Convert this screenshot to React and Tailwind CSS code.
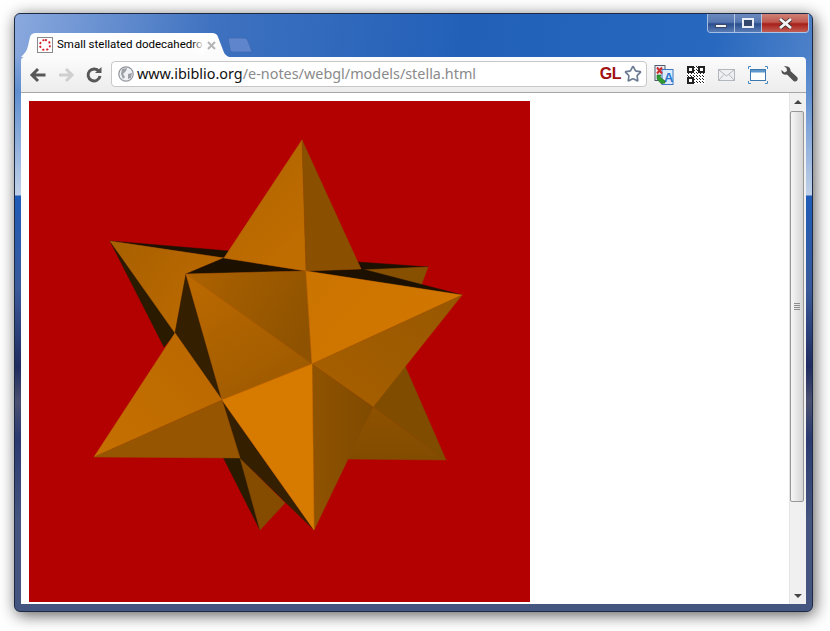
import React from 'react';
import { Star } from 'lucide-react';

const UI_FONT = 'font-["Noto_Sans","Open_Sans",sans-serif]';

const faces = [
  // rear spikes
  { points: '358,262 428,267 362,270', fill: '#1c1000' },
  { points: '360,270 428,267 421,286 400,290', fill: '#875000' },
  { points: '373,407 405,366 446,460', fill: '#804c00' },
  { points: '373,407 446,460 347,459', fill: 'url(#rearLow)' },
  { points: '223,457 260,530 241,458', fill: '#291a00' },
  { points: '240,458 285,503 260,530', fill: '#854c00' },
  { points: '110,241 229,251 224,258', fill: '#1c1000' },
  { points: '110,241 164,347 176,333', fill: '#2a1a00' },
  // left upper spike
  { points: '110,241 224,258 186,274 175,333', fill: 'url(#leftUp)' },
  { points: '186,274 175,333 222,400', fill: '#342000' },
  // top spike
  { points: '224,258 306,271 186,274', fill: '#1c1000' },
  { points: '306,271 362,269 462,295', fill: '#1c1000' },
  { points: '302,140 224,258 306,271', fill: 'url(#topLeft)' },
  { points: '302,140 306,271 361,269', fill: '#8a5000' },
  // front body
  { points: '186,274 306,271 312,364', fill: 'url(#bodyTop)' },
  { points: '186,274 312,364 222,400', fill: 'url(#bodyLeft)' },
  { points: '306,271 462,295 312,364', fill: 'url(#bright)' },
  { points: '312,364 462,295 373,407', fill: 'url(#rightMid)' },
  { points: '312,364 373,407 314,530', fill: 'url(#rightLow)' },
  { points: '222,400 314,530 240,458', fill: '#342000' },
  { points: '222,400 312,364 314,530', fill: '#d67a00' },
  // lower left spike
  { points: '175,333 222,400 94,457', fill: 'url(#lowLeft)' },
  { points: '94,457 222,400 240,458', fill: '#965500' },
];

function Stella() {
  return (
    <svg width="501" height="501" viewBox="29 101 501 501" className="block">
      <defs>
        <linearGradient id="leftUp" x1="0" y1="0" x2="1" y2="0.6">
          <stop offset="0" stopColor="#a86000" />
          <stop offset="1" stopColor="#bc6a00" />
        </linearGradient>
        <linearGradient id="topLeft" x1="0" y1="0" x2="0.6" y2="1">
          <stop offset="0" stopColor="#ad6300" />
          <stop offset="1" stopColor="#c06d00" />
        </linearGradient>
        <linearGradient id="bodyTop" x1="0" y1="0.2" x2="1" y2="0.6">
          <stop offset="0" stopColor="#ab6100" />
          <stop offset="1" stopColor="#8e5200" />
        </linearGradient>
        <linearGradient id="bodyLeft" x1="0.2" y1="0" x2="0.8" y2="1">
          <stop offset="0" stopColor="#ba6900" />
          <stop offset="1" stopColor="#9c5900" />
        </linearGradient>
        <linearGradient id="bright" x1="0" y1="0" x2="1" y2="0.5">
          <stop offset="0" stopColor="#cb7400" />
          <stop offset="1" stopColor="#d27700" />
        </linearGradient>
        <linearGradient id="rightMid" x1="0" y1="1" x2="1" y2="0">
          <stop offset="0" stopColor="#a86000" />
          <stop offset="1" stopColor="#975700" />
        </linearGradient>
        <linearGradient id="rightLow" x1="0" y1="0" x2="1" y2="0">
          <stop offset="0" stopColor="#905300" />
          <stop offset="1" stopColor="#7f4a00" />
        </linearGradient>
        <linearGradient id="rearLow" x1="0" y1="0" x2="0" y2="1">
          <stop offset="0" stopColor="#8e5200" />
          <stop offset="1" stopColor="#824c00" />
        </linearGradient>
        <linearGradient id="lowLeft" x1="0" y1="1" x2="1" y2="0">
          <stop offset="0" stopColor="#c57000" />
          <stop offset="1" stopColor="#b96800" />
        </linearGradient>
      </defs>
      <rect x="29" y="101" width="501" height="501" fill="#b30000" />
      {/* thin stroke of the same fill hides the red seams between faces */}
      {faces.map((f) => (
        <polygon key={f.points} points={f.points} fill={f.fill} stroke={f.fill} strokeWidth="0.5" strokeLinejoin="round" />
      ))}
    </svg>
  );
}

function Favicon() {
  return (
    <div className="w-[16px] h-[16px] border border-[#8a8a8a] bg-white flex items-center justify-center">
      <div className="w-[12px] h-[12px] rounded-full border-2 border-dotted border-[#d4202a]" />
    </div>
  );
}

function TabShape() {
  return (
    <svg width="212" height="24" viewBox="0 0 212 24" className="absolute left-0 top-0">
      <defs>
        <linearGradient id="tabFill" x1="0" y1="0" x2="0" y2="1">
          <stop offset="0" stopColor="#ffffff" />
          <stop offset="1" stopColor="#fbfbfb" />
        </linearGradient>
      </defs>
      <path
        d="M0 24 C3 21 6 18 7 13 L9 4 C10 1 12 0 15 0 L191 0 C194 0 196 1 197 4 L202 17 C203 20 204 22 208 24 Z"
        fill="url(#tabFill)"
      />
    </svg>
  );
}

function NewTabShape() {
  return (
    <svg width="26" height="16" viewBox="0 0 26 16" className="mt-[4px] ml-[-6px]">
      <path
        d="M1 1 L17 1 C19 1 20 2 21 4 L25 15 L6 15 C4 15 3 14 3 12 Z"
        fill="#5f86cc"
        stroke="#3f69b3"
        strokeWidth="0.8"
      />
    </svg>
  );
}

function WindowButtons() {
  return (
    <div className="flex h-[19px] mr-[-3px] border border-t-0 border-[#dbe6f5b0] rounded-b-[4px] overflow-hidden">
      <div className="w-[27px] flex items-center justify-center border-r border-[#dbe6f5b0] bg-[linear-gradient(#6a8abf_0%,#5777b0_45%,#2b4f8f_55%,#5a7cb5_100%)]">
        <div className="w-[12px] h-[4px] mt-[6px] bg-[#f2f4f8] border border-[#3a4a66]" />
      </div>
      <div className="w-[27px] flex items-center justify-center border-r border-[#dbe6f5b0] bg-[linear-gradient(#6a8abf_0%,#5777b0_45%,#2b4f8f_55%,#5a7cb5_100%)]">
        <div className="w-[12px] h-[10px] bg-[#33466b] border-2 border-[#e8ecf4]" />
      </div>
      <div className="w-[46px] flex items-center justify-center bg-[linear-gradient(#cf8076_0%,#c05a50_45%,#a8201a_55%,#c25e54_100%)]">
        <svg width="15" height="11" viewBox="0 0 15 11">
          <path d="M2 1 L13 10 M13 1 L2 10" stroke="#3a2a2a" strokeWidth="4.2" />
          <path d="M2 1 L13 10 M13 1 L2 10" stroke="#f4f4f4" strokeWidth="2.8" />
        </svg>
      </div>
    </div>
  );
}

function NavIcons() {
  return (
    <div className="flex items-center gap-[10px] w-[82px] pl-[8px]">
      <svg width="18" height="16" viewBox="0 0 18 16">
        <path d="M9 2 L3 8 L9 14 M3 8 H16.5" fill="none" stroke="#585858" strokeWidth="3" />
      </svg>
      <svg width="18" height="16" viewBox="0 0 18 16">
        <path d="M9 2 L15 8 L9 14 M15 8 H2" fill="none" stroke="#cfcfcf" strokeWidth="3" />
      </svg>
      <svg width="18" height="18" viewBox="0 0 18 18">
        <path d="M14 5.5 A6 6 0 1 0 15 10" fill="none" stroke="#585858" strokeWidth="3" />
        <path d="M10 7 L16.5 7 L16.5 1 Z" fill="#585858" />
      </svg>
    </div>
  );
}

function GlobeIcon() {
  return (
    <svg width="16" height="16" viewBox="0 0 16 16">
      <circle cx="8" cy="8" r="7.2" fill="#eef0f3" stroke="#8f949b" strokeWidth="1.2" />
      <path d="M4 3 L9 2 L8 5 L5 8 L7 11 L5 13 L3 8 Z M10 8 L14 7 L13 12 L10 13 Z" fill="#9ca1a8" />
    </svg>
  );
}

function TranslateIcon() {
  return (
    <svg width="20" height="20" viewBox="0 0 20 20">
      <rect x="1" y="0.5" width="10" height="15" fill="#e9eef4" stroke="#4f5f70" />
      <rect x="8" y="4.5" width="11" height="15" fill="#dcebfb" stroke="#3c79c4" />
      <text x="10" y="17" fontSize="13" fontWeight="700" fill="#2a76cf" fontFamily="Liberation Sans, sans-serif">A</text>
      <path d="M3 2.5 L8 8.5 M8 2.5 L3 8.5" stroke="#cc2b2b" strokeWidth="2" />
      <path d="M3 10 L7 10 L6 12 L11 16 L11 18 L7 18.5 L3 14 Z" fill="#2f9a2f" stroke="#1b6a1b" strokeWidth="0.6" />
    </svg>
  );
}

function QrIcon() {
  const size = 18;
  const inFinder = (x, y) => (x < 7 && y < 7) || (x > 10 && y < 7) || (x < 7 && y > 10);
  const dots = [];
  for (let y = 0; y < size; y++) {
    for (let x = 0; x < size; x++) {
      if (!inFinder(x, y) && (x * 7 + y * 13 + x * y) % 3 === 0) dots.push([x, y]);
    }
  }
  return (
    <svg width="18" height="18" viewBox="0 0 18 18" shapeRendering="crispEdges">
      <rect width="18" height="18" fill="#ffffff" />
      {dots.map(([x, y]) => (
        <rect key={`${x}-${y}`} x={x} y={y} width="1" height="1" fill="#222222" />
      ))}
      <path d="M0 0 H7 V7 H0 Z M2 2 V5 H5 V2 Z" fill="#222222" fillRule="evenodd" />
      <path d="M11 0 H18 V7 H11 Z M13 2 V5 H16 V2 Z" fill="#222222" fillRule="evenodd" />
      <path d="M0 11 H7 V18 H0 Z M2 13 V16 H5 V13 Z" fill="#222222" fillRule="evenodd" />
    </svg>
  );
}

function MailIcon() {
  return (
    <svg width="17" height="12" viewBox="0 0 17 12">
      <rect x="0.5" y="0.5" width="16" height="11" fill="#eef0f2" stroke="#b2b7bd" />
      <path d="M1 1 L8.5 7 L16 1 M1 11 L6 5.5 M16 11 L11 5.5" fill="none" stroke="#b2b7bd" />
    </svg>
  );
}

function FullscreenIcon() {
  return (
    <svg width="20" height="18" viewBox="0 0 20 18">
      <path d="M0.5 3 V0.5 H3 M17 0.5 H19.5 V3 M19.5 15 V17.5 H17 M3 17.5 H0.5 V15" fill="none" stroke="#4a8ac4" />
      <rect x="2.5" y="3.5" width="15" height="11" fill="#ffffff" stroke="#3d79ae" />
      <rect x="3" y="4" width="14" height="2.5" fill="#5e97cb" />
    </svg>
  );
}

function WrenchIcon() {
  return (
    <svg width="17" height="17" viewBox="0 0 17 17">
      <path
        d="M0.5 4 L3.5 6.5 L6 5 L5.5 2 L3 0.5 C6.5 -0.5 10 1.5 9.5 5 L16 11 C17.5 12.5 16.5 15.5 14 15.5 C13 15.5 12.5 15 12 14.5 L6 8.5 C3 9.5 0 7.5 0.5 4 Z"
        fill="#515151"
      />
    </svg>
  );
}

function Scrollbar() {
  return (
    <div className="w-[17px] shrink-0 flex flex-col bg-[#f0f0f0] border-l border-[#e4e4e4]">
      <div className="h-[17px] flex items-center justify-center">
        <div className="w-0 h-0 border-x-[4px] border-x-transparent border-b-[4px] border-b-[#444444]" />
      </div>
      <div className="w-[14px] h-[391px] mt-[1px] flex flex-col items-center justify-center gap-[1px] rounded-[2px] border border-[#979797] bg-[linear-gradient(90deg,#f6f6f6,#e6e6e6_50%,#d4d4d4)]">
        <div className="w-[6px] h-px bg-[#8c8c8c]" />
        <div className="w-[6px] h-px bg-[#8c8c8c]" />
        <div className="w-[6px] h-px bg-[#8c8c8c]" />
        <div className="w-[6px] h-px bg-[#8c8c8c]" />
      </div>
      <div className="flex-1" />
      <div className="h-[17px] flex items-center justify-center">
        <div className="w-0 h-0 border-x-[4px] border-x-transparent border-t-[4px] border-t-[#444444]" />
      </div>
    </div>
  );
}

export default function App() {
  return (
    <div className={`w-[830px] h-[631px] overflow-hidden bg-white pl-[14px] pt-[13px] ${UI_FONT}`}>
      <div className="w-[799px] h-[599px] flex flex-col px-[6px] pb-[7px] rounded-[6px] border border-[#1c2a44] shadow-[2px_3px_16px_rgba(0,0,0,0.65)] bg-[linear-gradient(180deg,rgba(95,143,208,0)_7%,#5f8fd0_13%,#c0d0e8_30.3%,#1f5cb8_30.5%,#3a5a9a_46%,#202c60_59%,#4a5070_65%,#2a3a70_71%,#44557f_85%,#44557f_100%),linear-gradient(100deg,#8aa9de_0%,#3f72c0_22%,#2260b8_50%,#2868be_78%,#7199d4_100%)]">
        <div className="h-[19px] shrink-0 flex justify-end">
          <WindowButtons />
        </div>
        <div className="h-[24px] shrink-0 flex">
          <div className="relative w-[212px] h-[24px] shrink-0 flex items-center pl-[16px]">
            <TabShape />
            <div className="relative mr-[4px]">
              <Favicon />
            </div>
            <div className="relative w-[147px] whitespace-nowrap text-[11.5px] font-['Roboto',sans-serif] text-black">
              Small stellated dodecahedro
              <div className="absolute right-0 top-0 bottom-0 w-[12px] bg-[linear-gradient(90deg,rgba(255,255,255,0),#ffffff)]" />
            </div>
            <svg width="9" height="9" viewBox="0 0 9 9" className="relative ml-[3px]">
              <path d="M1 1 L8 8 M8 1 L1 8" stroke="#b5b5b5" strokeWidth="2" />
            </svg>
          </div>
          <NewTabShape />
        </div>
        <div className="h-[36px] shrink-0 flex items-center rounded-t-[4px] border-b border-[#a6a6a6] bg-[linear-gradient(#fcfcfc,#ececec)]">
          <NavIcons />
          <div className="w-[536px] h-[26px] mt-[-1px] ml-[8px] shrink-0 flex items-center pl-[6px] pr-[4px] rounded-[4px] border border-[#c8c8c8] bg-white">
            <GlobeIcon />
            <div className="flex-1 ml-[3px] text-[14.4px] whitespace-nowrap text-[#8a8a8a]">
              <span className="text-[#111111]">www.ibiblio.org</span>/e-notes/webgl/models/stella.html
            </div>
            <span className="text-[16px] font-bold font-['Liberation_Sans',sans-serif] text-[#a01010] tracking-[-0.5px]">GL</span>
            <Star size={18} strokeWidth={2.2} className="ml-[3px] text-[#6b7a92]" />
          </div>
          <div className="flex items-center ml-[7px] w-[153px] gap-[13px]">
            <TranslateIcon />
            <QrIcon />
            <MailIcon />
            <FullscreenIcon />
            <WrenchIcon />
          </div>
        </div>
        <div className="flex-1 min-h-0 flex bg-white">
          <div className="flex-1 pl-[8px] pt-[8px]">
            <Stella />
          </div>
          <Scrollbar />
        </div>
      </div>
    </div>
  );
}
